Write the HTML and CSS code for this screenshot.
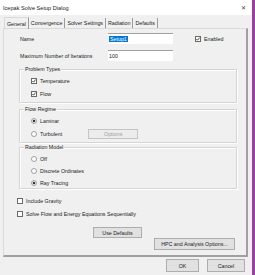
FILE: index.html
```html
<!DOCTYPE html>
<html lang="en">
<head>
  <meta charset="UTF-8" />
  <title>Icepak Solve Setup Dialog</title>
  <link rel="stylesheet" href="styles.css">
</head>
<body>
  <div class="screen">
    <div class="window">
      <div class="titlebar">
        <span class="title">Icepak Solve Setup Dialog</span>
        <span class="close">&#x2715;</span>
      </div>

      <div class="tabs">
        <div class="tab active">General</div>
        <div class="tab">Convergence</div>
        <div class="tab">Solver Settings</div>
        <div class="tab">Radiation</div>
        <div class="tab">Defaults</div>
      </div>

      <div class="panel">
        <div class="field-row">
          <span class="label">Name</span>
          <span class="input"><span class="selected">Setup1</span></span>
          <span class="check enabled-check">
            <svg class="box" width="6" height="6" viewBox="0 0 6 6"><rect x="0.5" y="0.5" width="5" height="5" fill="#fff" stroke="#6a6a6a"/><polyline points="1.4,3 2.5,4.2 4.6,1.6" fill="none" stroke="#333" stroke-width="0.9"/></svg>
            Enabled
          </span>
        </div>
        <div class="field-row second">
          <span class="label">Maximum Number of Iterations</span>
          <span class="input">100</span>
        </div>

        <div class="group problem">
          <span class="group-title">Problem Types</span>
          <div class="option">
            <svg class="box" width="6" height="6" viewBox="0 0 6 6"><rect x="0.5" y="0.5" width="5" height="5" fill="#fff" stroke="#6a6a6a"/><polyline points="1.4,3 2.5,4.2 4.6,1.6" fill="none" stroke="#333" stroke-width="0.9"/></svg>
            Temperature
          </div>
          <div class="option">
            <svg class="box" width="6" height="6" viewBox="0 0 6 6"><rect x="0.5" y="0.5" width="5" height="5" fill="#fff" stroke="#6a6a6a"/><polyline points="1.4,3 2.5,4.2 4.6,1.6" fill="none" stroke="#333" stroke-width="0.9"/></svg>
            Flow
          </div>
        </div>

        <div class="group flow">
          <span class="group-title">Flow Regime</span>
          <div class="option">
            <svg class="box" width="6" height="6" viewBox="0 0 6 6"><circle cx="3" cy="3" r="2.5" fill="#fff" stroke="#8a8a8a" stroke-width="0.8"/><circle cx="3" cy="3" r="1.3" fill="#333"/></svg>
            Laminar
          </div>
          <div class="option">
            <svg class="box" width="6" height="6" viewBox="0 0 6 6"><circle cx="3" cy="3" r="2.5" fill="#fff" stroke="#8a8a8a" stroke-width="0.8"/></svg>
            Turbulent
            <span class="btn disabled options-btn">Options</span>
          </div>
        </div>

        <div class="group radiation">
          <span class="group-title">Radiation Model</span>
          <div class="option">
            <svg class="box" width="6" height="6" viewBox="0 0 6 6"><circle cx="3" cy="3" r="2.5" fill="#fff" stroke="#8a8a8a" stroke-width="0.8"/></svg>
            Off
          </div>
          <div class="option">
            <svg class="box" width="6" height="6" viewBox="0 0 6 6"><circle cx="3" cy="3" r="2.5" fill="#fff" stroke="#8a8a8a" stroke-width="0.8"/></svg>
            Discrete Ordinates
          </div>
          <div class="option">
            <svg class="box" width="6" height="6" viewBox="0 0 6 6"><circle cx="3" cy="3" r="2.5" fill="#fff" stroke="#8a8a8a" stroke-width="0.8"/><circle cx="3" cy="3" r="1.3" fill="#333"/></svg>
            Ray Tracing
          </div>
        </div>

        <div class="option loose gravity">
          <svg class="box" width="6" height="6" viewBox="0 0 6 6"><rect x="0.5" y="0.5" width="5" height="5" fill="#fff" stroke="#6a6a6a"/></svg>
          Include Gravity
        </div>
        <div class="option loose">
          <svg class="box" width="6" height="6" viewBox="0 0 6 6"><rect x="0.5" y="0.5" width="5" height="5" fill="#fff" stroke="#6a6a6a"/></svg>
          Solve Flow and Energy Equations Sequentially
        </div>

        <div class="defaults-row">
          <span class="btn">Use Defaults</span>
        </div>
        <div class="hpc-row">
          <span class="btn hpc-btn">HPC and Analysis Options...</span>
        </div>
      </div>

      <div class="footer">
        <span class="btn footer-btn ok">OK</span>
        <span class="btn footer-btn">Cancel</span>
      </div>
    </div>
    <div class="edge"></div>
  </div>
</body>
</html>
```

FILE: styles.css
```css
html, body {
  margin: 0;
  height: 100%;
}

body {
  font-family: 'Liberation Sans', Arial, sans-serif;
  font-size: 5.3px;
  color: #1a1a1a;
  background: #f0f0f0;
  overflow: hidden;
}

.screen {
  display: flex;
  height: 275px;
}

.window {
  width: 252px;
  background: #f0f0f0;
}

.edge {
  width: 3px;
  background: #9b3fa6;
}

.titlebar {
  height: 15px;
  display: flex;
  align-items: center;
  justify-content: space-between;
  padding: 0 6px 0 3px;
  background: #fff;
}

.title {
  font-size: 5.6px;
}

.close {
  font-size: 6px;
  color: #444;
}

.tabs {
  display: flex;
  margin: 1px 0 0 4px;
  height: 12px;
}

.tab {
  display: flex;
  align-items: center;
  padding: 0 2px;
  border-right: 1px solid #9a9a9a;
  margin-top: 2px;
}

.tab.active {
  margin-top: 0;
  border-top: 1px solid #dadada;
  border-left: 1px solid #dadada;
  position: relative;
  top: 1px;
}

.panel {
  margin-left: 3px;
  width: 242px;
  height: 222px;
  border: 1px solid #dadada;
  border-right: 2px solid #a0a0a0;
  border-bottom: 2px solid #a0a0a0;
  padding-top: 4px;
  box-sizing: content-box;
}

.field-row {
  display: flex;
  align-items: center;
  height: 11px;
  padding-left: 16px;
}

.field-row.second {
  margin-top: 6px;
}

.label {
  width: 88px;
}

.input {
  width: 64px;
  height: 10px;
  background: #fff;
  border-top: 1px solid #a0a0a0;
  display: flex;
  align-items: center;
  padding-left: 1px;
}

.selected {
  background: #0078d7;
  color: #fff;
  padding: 0 1px;
  line-height: 6px;
}

.check {
  display: flex;
  align-items: center;
}

.enabled-check {
  margin-left: 22px;
}

.box {
  display: block;
  flex: none;
  margin-right: 3px;
}

.group {
  position: relative;
  margin: 8px 0 0 15px;
  width: 216px;
  border: 1px solid #d5d5d5;
  box-shadow: inset 1px 1px 0 #fff, 1px 1px 0 #fff;
}

.group-title {
  position: absolute;
  top: -4px;
  left: 4px;
  padding: 0 1px;
  background: #f0f0f0;
  line-height: 6px;
}

.group.problem {
  height: 32px;
}

.group.flow {
  margin-top: 6px;
  height: 32px;
}

.group.radiation {
  margin-top: 4px;
  height: 40px;
}

.option {
  display: flex;
  align-items: center;
  height: 13px;
  padding-left: 11px;
}

.group.problem .option:first-of-type,
.group.flow .option:first-of-type {
  margin-top: 4px;
}

.group.radiation .option {
  height: 12px;
}

.group.radiation .option:first-of-type {
  margin-top: 5px;
}

.option.loose {
  padding-left: 13px;
}

.option.gravity {
  margin-top: 5px;
}

.btn {
  display: flex;
  align-items: center;
  justify-content: center;
  background: #e1e1e1;
  border: 1px solid #adadad;
  box-sizing: border-box;
}

.btn.disabled {
  color: #a0a0a0;
  background: #ececec;
  border-color: #c4c4c4;
}

.options-btn {
  width: 50px;
  height: 10px;
  margin-left: 26px;
}

.defaults-row {
  display: flex;
  margin: 7px 0 0 89px;
}

.defaults-row .btn {
  width: 49px;
  height: 11px;
}

.hpc-row {
  display: flex;
  justify-content: flex-end;
  margin: 0 11px 0 0;
}

.hpc-btn {
  width: 81px;
  height: 12px;
}

.footer {
  display: flex;
  justify-content: flex-end;
  gap: 8px;
  margin: 2px 7px 0 0;
}

.footer-btn {
  width: 38px;
  height: 13px;
}

.footer-btn.ok {
  width: 33px;
}
```
